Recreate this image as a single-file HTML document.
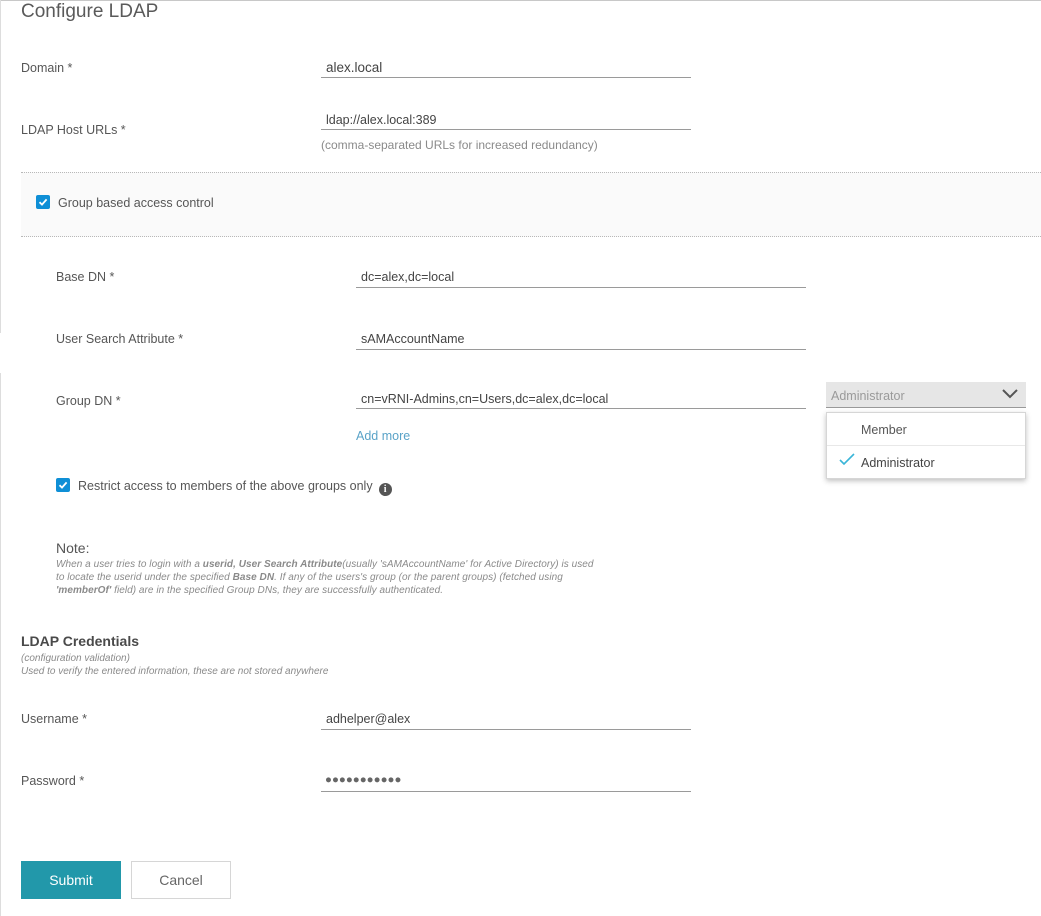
<!DOCTYPE html>
<html><head><meta charset="utf-8"><style>
*{margin:0;padding:0;box-sizing:border-box}
body{width:1041px;height:916px;background:#fff;position:relative;overflow:hidden;font-family:"Liberation Sans",sans-serif;color:#565656;font-size:12.5px}
.a{position:absolute;white-space:nowrap;line-height:16px}
.ln{position:absolute;height:1px;background:#9a9a9a}
.cb{position:absolute;width:14px;height:14px;border-radius:2px;background:#0f8fd6}
.cb svg{position:absolute;left:2px;top:2px}
.it{font-style:italic;font-size:10px;color:#8a8a8a;line-height:13px}
</style></head><body>
<div style="position:absolute;left:0;top:0;width:1041px;height:1px;background:#c8c8c8"></div>
<div style="position:absolute;left:0;top:0;width:1px;height:333px;background:#ddd"></div>
<div style="position:absolute;left:0;top:373px;width:1px;height:543px;background:#ddd"></div>

<div class="a" style="left:21px;top:1px;font-size:19px;line-height:22px;color:#5a5a5a">Configure LDAP</div>

<div class="a" style="left:21px;top:60px">Domain *</div>
<div class="a" style="left:326px;top:60px;font-size:13.5px;color:#444">alex.local</div>
<div class="ln" style="left:321px;top:77px;width:370px"></div>

<div class="a" style="left:21px;top:122px">LDAP Host URLs *</div>
<div class="a" style="left:326px;top:112px;color:#444">ldap://alex.local:389</div>
<div class="ln" style="left:321px;top:129px;width:370px"></div>
<div class="a" style="left:321px;top:137px;font-size:12px;color:#8a8a8a">(comma-separated URLs for increased redundancy)</div>

<div style="position:absolute;left:21px;top:172px;width:1020px;height:65px;background:#fafafa;border-top:1px dotted #b8b8b8;border-bottom:1px dotted #b8b8b8"></div>
<div class="cb" style="left:36px;top:195px"><svg width="10" height="10" viewBox="0 0 10 10"><path d="M1.5 5.2 L4 7.6 L8.6 2.4" stroke="#fff" stroke-width="1.8" fill="none"/></svg></div>
<div class="a" style="left:58px;top:195px">Group based access control</div>

<div class="a" style="left:56px;top:269px">Base DN *</div>
<div class="a" style="left:361px;top:269px;color:#444">dc=alex,dc=local</div>
<div class="ln" style="left:356px;top:287px;width:450px"></div>

<div class="a" style="left:56px;top:331px">User Search Attribute *</div>
<div class="a" style="left:361px;top:331px;color:#444">sAMAccountName</div>
<div class="ln" style="left:356px;top:349px;width:450px"></div>

<div class="a" style="left:56px;top:393px">Group DN *</div>
<div class="a" style="left:361px;top:391px;color:#444">cn=vRNI-Admins,cn=Users,dc=alex,dc=local</div>
<div class="ln" style="left:356px;top:408px;width:450px"></div>
<div class="a" style="left:356px;top:428px;color:#5aa3c8">Add more</div>

<div style="position:absolute;left:826px;top:382px;width:200px;height:26px;background:#e6e6e6;border-bottom:1px solid #999"></div>
<div class="a" style="left:831px;top:388px;color:#9a9a9a">Administrator</div>
<svg style="position:absolute;left:1002px;top:389px" width="16" height="10" viewBox="0 0 16 10"><path d="M1 1 L8 8 L15 1" stroke="#555" stroke-width="2" fill="none"/></svg>
<div style="position:absolute;left:826px;top:412px;width:200px;height:67px;background:#fff;border:1px solid #d6d6d6;box-shadow:0 2px 5px rgba(0,0,0,.25)"></div>
<div style="position:absolute;left:827px;top:445px;width:198px;height:1px;background:#e8e8e8"></div>
<div class="a" style="left:861px;top:422px">Member</div>
<svg style="position:absolute;left:839px;top:453px" width="16" height="12" viewBox="0 0 16 12"><path d="M1 7 L5 11 L15 1" stroke="#3ab5d8" stroke-width="1.6" fill="none"/></svg>
<div class="a" style="left:861px;top:455px;color:#444">Administrator</div>

<div class="cb" style="left:56px;top:478px"><svg width="10" height="10" viewBox="0 0 10 10"><path d="M1.5 5.2 L4 7.6 L8.6 2.4" stroke="#fff" stroke-width="1.8" fill="none"/></svg></div>
<div class="a" style="left:78px;top:478px;font-size:12.5px">Restrict access to members of the above groups only<span style="display:inline-block;margin-left:6px;width:13px;height:13px;border-radius:50%;background:#555;color:#fff;font-size:10px;font-weight:bold;text-align:center;line-height:13px;vertical-align:-2px;font-family:'Liberation Serif',serif">i</span></div>

<div class="a" style="left:56px;top:540px;font-size:14px;color:#555">Note:</div>
<div class="a it" style="left:56px;top:558px;letter-spacing:0.05px">When a user tries to login with a <b>userid, User Search Attribute</b>(usually 'sAMAccountName' for Active Directory) is used</div>
<div class="a it" style="left:56px;top:571px;letter-spacing:0.05px">to locate the userid under the specified <b>Base DN</b>. If any of the users's group (or the parent groups) (fetched using</div>
<div class="a it" style="left:56px;top:584px;letter-spacing:0.05px"><b>'memberOf'</b> field) are in the specified Group DNs, they are successfully authenticated.</div>

<div class="a" style="left:21px;top:633px;font-size:14px;font-weight:bold;color:#4a4a4a">LDAP Credentials</div>
<div class="a it" style="left:21px;top:652px">(configuration validation)</div>
<div class="a it" style="left:21px;top:665px">Used to verify the entered information, these are not stored anywhere</div>

<div class="a" style="left:21px;top:711px">Username *</div>
<div class="a" style="left:326px;top:711px;color:#444">adhelper@alex</div>
<div class="ln" style="left:321px;top:729px;width:370px"></div>

<div class="a" style="left:21px;top:773px">Password *</div>
<div class="a" style="left:325px;top:772px;color:#666;font-size:11.5px">●●●●●●●●●●●</div>
<div class="ln" style="left:321px;top:791px;width:370px"></div>

<div style="position:absolute;left:21px;top:861px;width:100px;height:38px;background:#2298aa;color:#fff;font-size:14px;text-align:center;line-height:38px">Submit</div>
<div style="position:absolute;left:131px;top:861px;width:100px;height:38px;border:1px solid #d6d6d6;background:#fff;color:#666;font-size:14px;text-align:center;line-height:36px">Cancel</div>
</body></html>
